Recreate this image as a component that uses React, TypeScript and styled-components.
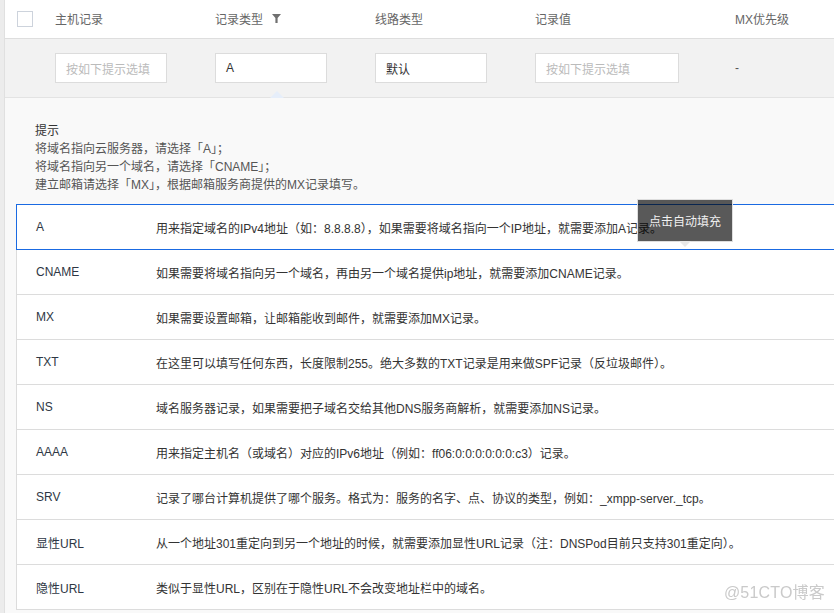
import styled, { createGlobalStyle } from 'styled-components';

const GlobalStyle = createGlobalStyle`
    html, body {
        margin: 0;
        padding: 0;
        background: #ececec;
        overflow: hidden;
    }
    body {
        font-family: "Liberation Sans", "Noto Sans CJK SC", sans-serif;
        font-size: 12px;
        color: #333;
    }
    * {
        box-sizing: border-box;
    }
`;

const blue = '#1a6ae2';

const AppWrapper = styled.main`
    margin-left: 4px;
    width: 920px;
    min-height: 100vh;
    background: #f9f9f9;
    border-left: 1px solid #e0e0e0;
    display: flex;
    flex-flow: column;
`;

const HeaderRow = styled.div`
    display: grid;
    grid-template-columns: 50px 160px 160px 160px 200px 1fr;
    height: 39px;
    padding-bottom: 1px;
    align-items: center;
    background: #fff;
    border-bottom: 1px solid #dedede;
    color: #666;
`;

const CheckCell = styled.div`
    padding-left: 12px;
    display: flex;
    align-items: center;
`;

const Checkbox = styled.span`
    width: 16px;
    height: 16px;
    border: 1px solid #cdd3dc;
    background: #fff;
`;

const HeadCell = styled.div`
    display: flex;
    align-items: center;
    gap: 9px;
`;

const EditRow = styled.div`
    display: grid;
    grid-template-columns: 50px 160px 160px 160px 200px 1fr;
    height: 59px;
    align-items: center;
    background: #f2f2f2;
    border-bottom: 1px solid #e3e3e3;
`;

const Field = styled.div<{ $wide?: boolean; $placeholder?: boolean }>`
    width: ${(p) => (p.$wide ? '144px' : '112px')};
    height: 30px;
    border: 1px solid #dcdcdc;
    background: #fff;
    padding: 0 10px;
    display: flex;
    align-items: center;
    color: ${(p) => (p.$placeholder ? '#bbb' : '#333')};
`;

const Dash = styled.div`
    color: #555;
`;

const Panel = styled.section`
    position: relative;
    flex: 1;
    padding: 24px 0 0 11px;
`;

const Pointer = styled.div`
    position: absolute;
    top: -7px;
    left: 265px;
    width: 0;
    height: 0;
    border-left: 7px solid transparent;
    border-right: 7px solid transparent;
    border-bottom: 7px solid #e6eefa;
`;

const Tips = styled.div`
    padding-left: 19px;
    line-height: 18px;
    color: #555;
    margin-bottom: 10px;
`;

const TipsTitle = styled.div`
    color: #333;
`;

const List = styled.div`
    display: flex;
    flex-flow: column;
    background: #fff;
`;

const Row = styled.div<{ $selected?: boolean }>`
    display: flex;
    align-items: center;
    height: ${(p) => (p.$selected ? '46px' : '45px')};
    padding-left: 19px;
    border-left: 1px solid ${(p) => (p.$selected ? blue : '#dcdcdc')};
    border-bottom: 1px solid ${(p) => (p.$selected ? blue : '#dcdcdc')};
    border-top: ${(p) => (p.$selected ? `1px solid ${blue}` : 'none')};
    color: #333;
`;

const TypeCell = styled.div`
    width: 120px;
    flex-shrink: 0;
    color: #2e3744;
`;

const Desc = styled.div`
    white-space: nowrap;
`;

const Tooltip = styled.div`
    position: absolute;
    top: 101px;
    left: 632px;
    width: 96px;
    height: 43px;
    background: rgba(0, 0, 0, 0.65);
    border: 1px solid #dedede;
    color: #f0f0f0;
    display: flex;
    align-items: center;
    justify-content: center;

    &::after {
        content: '';
        position: absolute;
        bottom: -6px;
        left: 41px;
        border-left: 6px solid transparent;
        border-right: 6px solid transparent;
        border-top: 6px solid #e8e8e8;
    }
`;

const Watermark = styled.div`
    position: fixed;
    right: 9px;
    bottom: 10px;
    font-size: 16px;
    color: #cacaca;
    letter-spacing: 0.2px;
`;

const FilterIcon = () => (
    <svg width="9" height="9" viewBox="0 0 9 9">
        <path d="M0 0H9L5.6 4V9H3.4V4Z" fill="#707070" />
    </svg>
);

const records = [
    { type: 'A', desc: '用来指定域名的IPv4地址（如：8.8.8.8），如果需要将域名指向一个IP地址，就需要添加A记录。' },
    { type: 'CNAME', desc: '如果需要将域名指向另一个域名，再由另一个域名提供ip地址，就需要添加CNAME记录。' },
    { type: 'MX', desc: '如果需要设置邮箱，让邮箱能收到邮件，就需要添加MX记录。' },
    { type: 'TXT', desc: '在这里可以填写任何东西，长度限制255。绝大多数的TXT记录是用来做SPF记录（反垃圾邮件）。' },
    { type: 'NS', desc: '域名服务器记录，如果需要把子域名交给其他DNS服务商解析，就需要添加NS记录。' },
    { type: 'AAAA', desc: '用来指定主机名（或域名）对应的IPv6地址（例如：ff06:0:0:0:0:0:0:c3）记录。' },
    { type: 'SRV', desc: '记录了哪台计算机提供了哪个服务。格式为：服务的名字、点、协议的类型，例如：_xmpp-server._tcp。' },
    { type: '显性URL', desc: '从一个地址301重定向到另一个地址的时候，就需要添加显性URL记录（注：DNSPod目前只支持301重定向）。' },
    { type: '隐性URL', desc: '类似于显性URL，区别在于隐性URL不会改变地址栏中的域名。' },
];

const App = () => {
    return (
        <>
            <GlobalStyle />
            <AppWrapper>
                <HeaderRow>
                    <CheckCell>
                        <Checkbox />
                    </CheckCell>
                    <HeadCell>主机记录</HeadCell>
                    <HeadCell>
                        记录类型 <FilterIcon />
                    </HeadCell>
                    <HeadCell>线路类型</HeadCell>
                    <HeadCell>记录值</HeadCell>
                    <HeadCell>MX优先级</HeadCell>
                </HeaderRow>
                <EditRow>
                    <div />
                    <div>
                        <Field $placeholder>按如下提示选填</Field>
                    </div>
                    <div>
                        <Field>A</Field>
                    </div>
                    <div>
                        <Field>默认</Field>
                    </div>
                    <div>
                        <Field $wide $placeholder>
                            按如下提示选填
                        </Field>
                    </div>
                    <Dash>-</Dash>
                </EditRow>
                <Panel>
                    <Pointer />
                    <Tips>
                        <TipsTitle>提示</TipsTitle>
                        <div>将域名指向云服务器，请选择「A」；</div>
                        <div>将域名指向另一个域名，请选择「CNAME」；</div>
                        <div>建立邮箱请选择「MX」，根据邮箱服务商提供的MX记录填写。</div>
                    </Tips>
                    <List>
                        {records.map((r, i) => (
                            <Row key={r.type} $selected={i === 0}>
                                <TypeCell>{r.type}</TypeCell>
                                <Desc>{r.desc}</Desc>
                            </Row>
                        ))}
                    </List>
                    <Tooltip>点击自动填充</Tooltip>
                </Panel>
            </AppWrapper>
            <Watermark>@51CTO博客</Watermark>
        </>
    );
};

export default App;
